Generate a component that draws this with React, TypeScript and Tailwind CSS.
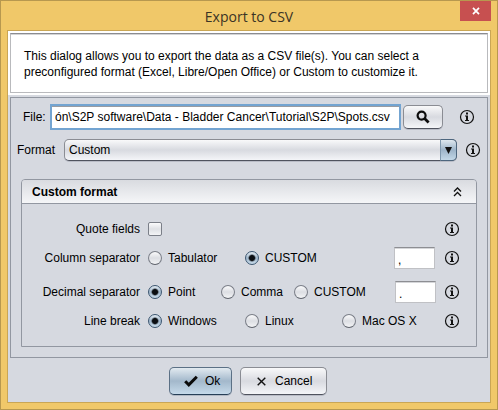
import React, { useState } from "react";

function InfoIcon() {
  return (
    <svg width="16" height="16" viewBox="0 0 16 16" className="block shrink-0" role="img" aria-label="Information">
      <circle cx="8" cy="8" r="6.5" fill="none" stroke="#111" strokeWidth="1.2" />
      <rect x="7" y="3.5" width="2" height="2" fill="#111" />
      <path d="M6 6.5h3V11h1v1H6v-1h1V7.5H6z" fill="#111" />
    </svg>
  );
}

const radioClass =
  "m-0 size-[14px] shrink-0 appearance-none rounded-full border border-[#7b7f88] border-b-[#5f636c] bg-linear-to-b from-[#fbfbfc] via-[#dcdee3] to-[#f3f4f6] checked:border-[#3c5670] checked:bg-[radial-gradient(circle,#0b0e12_0,#0b0e12_2.5px,transparent_4px),linear-gradient(#e3ebf2,#9fb6cb_50%,#c8dbea)]";

const fieldClass =
  "h-[22px] w-[41px] shrink-0 border border-[#c0c1c5] border-t-[#8d8e93] bg-white px-[3px] pt-1 shadow-[inset_0_1px_0_#d5d6d9] outline-none";

const buttonClass =
  "flex items-center rounded-[5px] border border-[#8a8c93] border-b-[#4f535e] bg-linear-to-b from-[#f9f9fa] via-[#d8dae0] to-[#f4f5f8] shadow-[0_1px_0_#b9bcc6]";

function Radio(props: {
  group: string;
  label: string;
  value: string;
  className?: string;
  onPick: (label: string) => void;
}) {
  const { group, label, value, className = "", onPick } = props;
  return (
    <label className={"flex shrink-0 items-center gap-[6px] whitespace-nowrap " + className}>
      <input
        type="radio"
        name={group}
        checked={value === label}
        onChange={() => onPick(label)}
        className={radioClass}
      />
      {label}
    </label>
  );
}

function Row({ label, htmlFor, children }: { label: string; htmlFor?: string; children: React.ReactNode }) {
  return (
    <div className="flex h-[22px] items-center pr-4">
      {htmlFor ? (
        <label htmlFor={htmlFor} className="mr-2 w-[118px] shrink-0 text-right">{label}</label>
      ) : (
        <span className="mr-2 w-[118px] shrink-0 text-right">{label}</span>
      )}
      <div className="flex flex-1 items-center">{children}</div>
      <InfoIcon />
    </div>
  );
}

export default function App() {
  const [column, setColumn] = useState("CUSTOM");
  const [decimal, setDecimal] = useState("Point");
  const [lineBreak, setLineBreak] = useState("Windows");

  return (
    <div className="flex min-h-screen flex-col border border-[#b7984f] bg-[#f0c869] px-[6px] pb-[6px] font-['Liberation_Sans',Arial,sans-serif] text-xs leading-4 text-black">
      <header className="grid h-[29px] grid-cols-[1fr_auto_1fr] items-start">
        <h1 className="col-start-2 pt-1 font-['Open_Sans',sans-serif] text-sm leading-6 text-[#3a3325]">
          Export to CSV
        </h1>
        <button aria-label="Close" className="flex h-5 w-[31px] items-center justify-center justify-self-end bg-[#c75050]">
          <svg width="8" height="8" viewBox="0 0 8 8">
            <path d="M1 .8l6 6.4M7 .8L1 7.2" stroke="#fff" strokeWidth="1.7" />
          </svg>
        </button>
      </header>

      <main className="flex flex-1 flex-col border border-[#c9a655] bg-[#d6d9e0]">
        <div className="bg-white p-[2px]">
          <p className="border border-[#b9babd] border-t-[#8b8c90] pt-[14px] pr-10 pb-[12px] pl-[13px] shadow-[inset_0_1px_0_#d3d4d6]">
            This dialog allows you to export the data as a CSV file(s). You can select a preconfigured format (Excel,
            Libre/Open Office) or Custom to customize it.
          </p>
        </div>

        <section className="mx-[2px] mt-[2px] border border-[#9297a1]">
          <div className="mt-[6px] flex items-center pr-3 pl-3">
            <label htmlFor="file" className="w-[27px] shrink-0">File:</label>
            <input
              id="file"
              type="text"
              defaultValue={"ón\\S2P software\\Data - Bladder Cancer\\Tutorial\\S2P\\Spots.csv"}
              className="h-[26px] min-w-0 flex-1 border-2 border-[#73a4d1] bg-white px-[3px] shadow-[inset_0_1px_0_#9a9ca1] outline-none"
            />
            <button aria-label="Browse" className={buttonClass + " mr-4 ml-[2px] h-6 w-10 shrink-0 justify-center"}>
              <svg width="14" height="14" viewBox="0 0 14 14">
                <circle cx="5.6" cy="5.6" r="4" fill="none" stroke="#0c0c0c" strokeWidth="2.2" />
                <path d="M8.6 8.6l4 4" stroke="#0c0c0c" strokeWidth="2.8" />
              </svg>
            </button>
            <InfoIcon />
          </div>

          <div className="mt-[9px] flex items-center pr-[6px] pl-[6px]">
            <label htmlFor="format" className="w-[47px] shrink-0">Format</label>
            <div className="relative mr-2 flex flex-1">
              <select
                id="format"
                defaultValue="Custom"
                className="h-[22px] w-full appearance-none rounded-[5px] border border-[#8a8c93] border-b-[#4f535e] bg-linear-to-b from-[#f9f9fa] via-[#d8dae0] to-[#f4f5f8] pl-1 shadow-[0_1px_0_#b9bcc6] outline-none"
              >
                <option>Custom</option>
                <option>Excel</option>
                <option>Libre/Open Office</option>
              </select>
              <span className="pointer-events-none absolute inset-y-0 right-0 flex w-[17px] items-center justify-center rounded-r-[5px] border border-[#4d667e] border-l-[#7f98ae] bg-linear-to-b from-[#dfe8ef] via-[#9db4c9] to-[#c3d8e8]">
                <svg width="7" height="7" viewBox="0 0 7 7">
                  <path d="M0 0h7L3.5 7z" fill="#111" />
                </svg>
              </span>
            </div>
            <InfoIcon />
          </div>

          <section className="mx-[10px] mt-[18px] mb-[10px] rounded-t-[4px] border border-[#9297a1]">
            <h2 className="flex h-6 items-center justify-between rounded-t-[3px] border-b border-[#9297a1] bg-linear-to-b from-[#d9dbe0] to-[#f5f6f8] pr-[14px] pl-[10px] font-bold">
              Custom format
              <button aria-label="Collapse">
                <svg width="9" height="10" viewBox="0 0 9 10" className="block">
                  <path d="M1 4.5L4.5 1 8 4.5M1 9l3.5-3.5L8 9" fill="none" stroke="#111" strokeWidth="1.3" />
                </svg>
              </button>
            </h2>
            <div className="flex flex-col gap-[7px] py-[14px]">
              <Row label="Quote fields" htmlFor="quote">
                <input
                  id="quote"
                  type="checkbox"
                  className="m-0 size-[14px] appearance-none rounded-[2px] border border-[#7b7f88] bg-linear-to-b from-[#fbfbfc] via-[#dfe1e5] to-[#f3f4f6] checked:bg-[#9fb6cb]"
                />
              </Row>
              <Row label="Column separator">
                <Radio group="column" label="Tabulator" value={column} onPick={setColumn} className="w-[97px]" />
                <Radio group="column" label="CUSTOM" value={column} onPick={setColumn} />
                <input aria-label="Custom column separator" defaultValue="," className={fieldClass + " mr-[9px] ml-auto"} />
              </Row>
              <div className="mt-[5px]">
                <Row label="Decimal separator">
                  <Radio group="decimal" label="Point" value={decimal} onPick={setDecimal} className="w-[73px]" />
                  <Radio group="decimal" label="Comma" value={decimal} onPick={setDecimal} className="w-[73px]" />
                  <Radio group="decimal" label="CUSTOM" value={decimal} onPick={setDecimal} />
                  <input aria-label="Custom decimal separator" defaultValue="." className={fieldClass + " mr-2 ml-auto"} />
                </Row>
              </div>
              <Row label="Line break">
                <Radio group="break" label="Windows" value={lineBreak} onPick={setLineBreak} className="w-[97px]" />
                <Radio group="break" label="Linux" value={lineBreak} onPick={setLineBreak} className="w-[97px]" />
                <Radio group="break" label="Mac OS X" value={lineBreak} onPick={setLineBreak} />
              </Row>
            </div>
          </section>
        </section>

        <footer className="mt-[9px] mb-[7px] flex justify-center gap-2 pr-[2px]">
          <button className="flex h-7 w-[63px] items-center gap-[7px] rounded-[5px] border border-[#5b7085] border-b-[#273f57] bg-linear-to-b from-[#e2eaf0] via-[#a3b8cb] to-[#c6daea] pl-[14px] shadow-[0_1px_0_#b0b8c4]">
            <svg width="14" height="12" viewBox="0 0 14 12">
              <path d="M1.2 6.2l3.6 3.6L12.8 1.8" fill="none" stroke="#0a0a0a" strokeWidth="3" />
            </svg>
            Ok
          </button>
          <button className={buttonClass + " h-7 w-[87px] gap-[9px] pl-4"}>
            <svg width="9" height="9" viewBox="0 0 9 9">
              <path d="M.7.7l7.6 7.6M8.3.7L.7 8.3" stroke="#111" strokeWidth="1.4" />
            </svg>
            Cancel
          </button>
        </footer>
      </main>
    </div>
  );
}
